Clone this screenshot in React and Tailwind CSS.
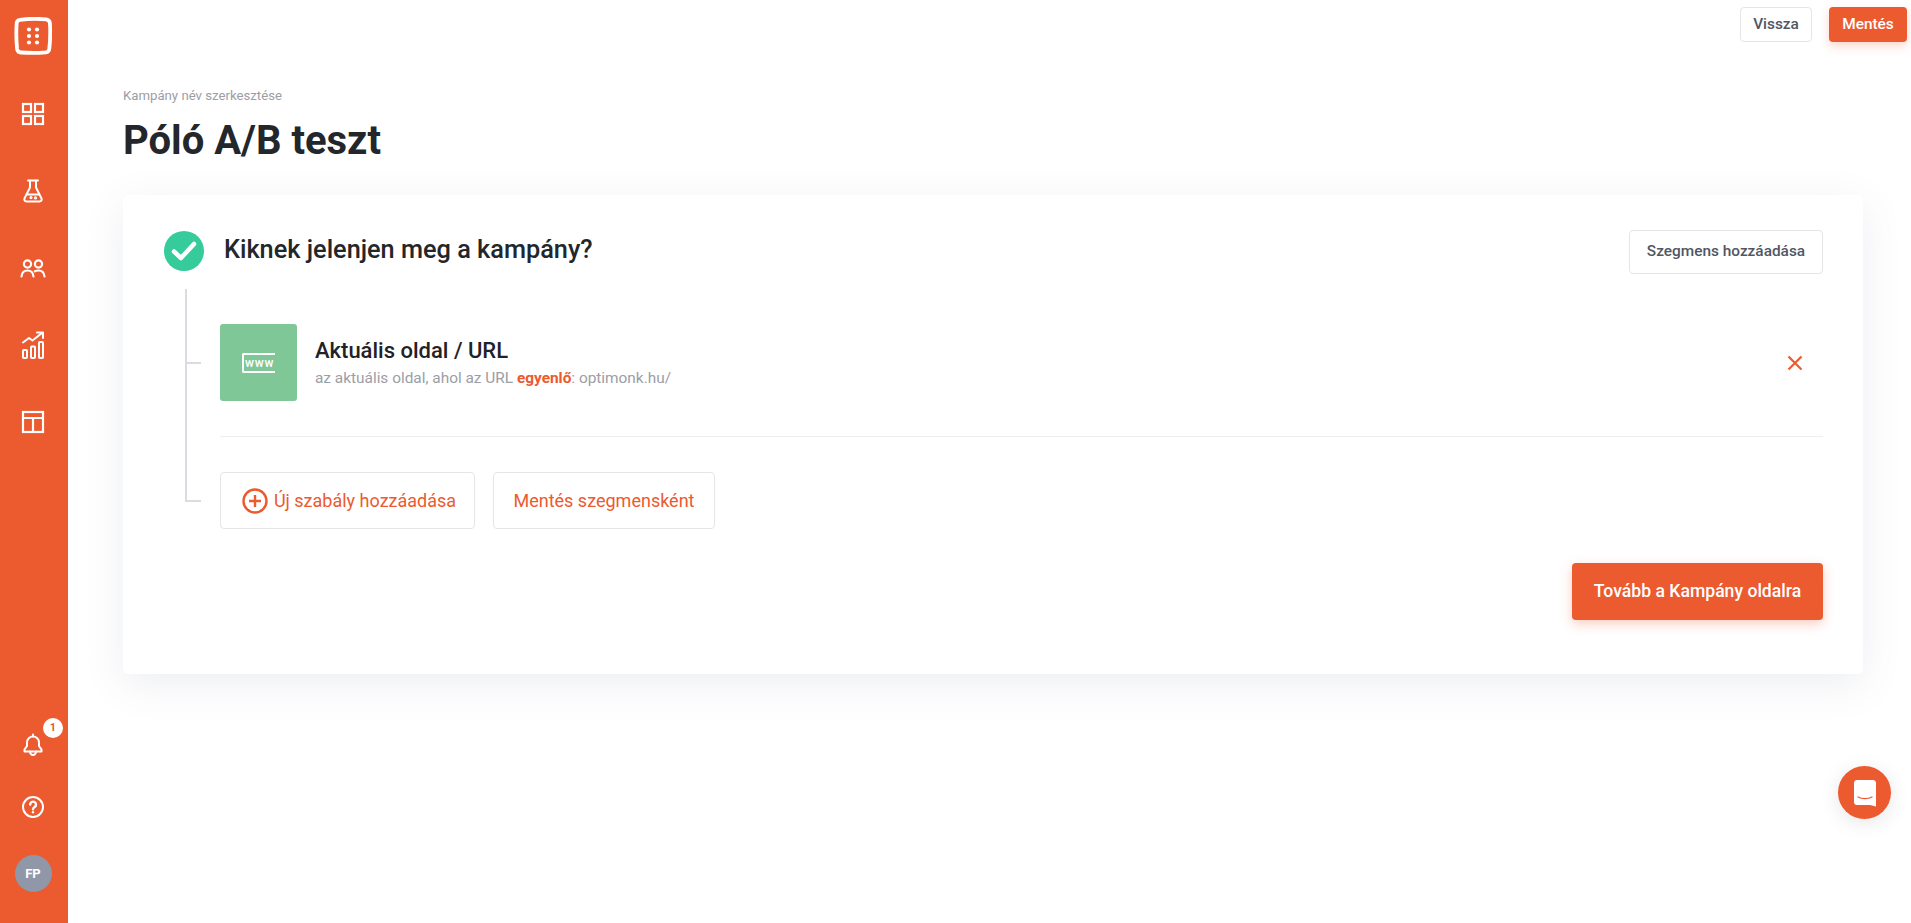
const LogoIcon = () => (
  <svg width="38" height="38" viewBox="0 0 38 38" fill="none">
    <path d="M6 2.800 C14 1.800 24 1.600 32 2.300 C34.400 2.500 35.700 3.800 35.900 6.200 C36.400 14 36.200 24 35.300 31.800 C35.100 34 33.900 35 31.800 35.300 C23 36.200 14 36 6.800 35.500 C4.700 35.400 3.400 34.200 3.100 32 C2.300 24 2.100 14 2.700 6 C2.900 4.200 4 3.100 6 2.800 Z" stroke="white" strokeWidth="3.800" />
    {[12.500, 19, 25.500].map((y) => (
      <g key={y} fill="white">
        <circle cx="15" cy={y} r="2.100" />
        <circle cx="23" cy={y} r="2.100" />
      </g>
    ))}
  </svg>
);

const GridIcon = () => (
  <svg width="24" height="24" viewBox="0 0 24 24" fill="none" stroke="white" strokeWidth="2.200">
    <rect x="2" y="2" width="8" height="8" />
    <rect x="14" y="2" width="8" height="8" />
    <rect x="2" y="14" width="8" height="8" />
    <rect x="14" y="14" width="8" height="8" />
  </svg>
);

const FlaskIcon = () => (
  <svg width="24" height="24" viewBox="0 0 24 24" fill="none" stroke="white" strokeWidth="2" strokeLinecap="round" strokeLinejoin="round">
    <path d="M7 1.500h10" />
    <path d="M9 1.500v7L3.600 19.200c-.8 1.700.2 3.300 2 3.300h12.800c1.800 0 2.800-1.600 2-3.300L15 8.500v-7" />
    <path d="M6.600 15.500h10.800" />
    <circle cx="10" cy="18.600" r=".6" fill="white" />
    <circle cx="14.500" cy="18.900" r=".6" fill="white" />
  </svg>
);

const UsersIcon = () => (
  <svg width="26" height="20" viewBox="0 0 26 20" fill="none" stroke="white" strokeWidth="2.200" strokeLinecap="round">
    <circle cx="7.500" cy="6" r="3.600" />
    <circle cx="18.500" cy="6" r="3.600" />
    <path d="M1.500 18.500c.4-4 2.800-6 6-6s5.600 2 6 6" />
    <path d="M14.800 13.300c1-.6 2.300-.8 3.700-.8 3.200 0 5.600 2 6 6" />
  </svg>
);

const ChartIcon = () => (
  <svg width="24" height="28" viewBox="0 0 24 28" fill="none" stroke="white" strokeWidth="2" strokeLinecap="round" strokeLinejoin="round">
    <path d="M2 11.500l6-4.500 3.500 2.500L21 2" />
    <path d="M16 1.500h6v5.500" />
    <rect x="2" y="19" width="4" height="8" rx=".8" />
    <rect x="10" y="15.500" width="4" height="11.500" rx=".8" />
    <rect x="18" y="11" width="4" height="16" rx=".8" />
  </svg>
);

const TemplateIcon = () => (
  <svg width="24" height="24" viewBox="0 0 24 24" fill="none" stroke="white" strokeWidth="2.200">
    <rect x="2" y="2" width="20" height="20" />
    <path d="M2 8h20M12 8v14" />
  </svg>
);

const BellIcon = () => (
  <svg width="20" height="24" viewBox="0 0 20 24" fill="none" stroke="white" strokeWidth="2" strokeLinecap="round" strokeLinejoin="round">
    <path d="M10 1.500v1.800" />
    <path d="M4 13V9.500a6 6 0 0 1 12 0V13l2.500 3.500v2h-17v-2z" />
    <path d="M7 18.500c.2 2.200 1.400 3.500 3 3.500s2.800-1.300 3-3.500" />
  </svg>
);

const HelpIcon = () => (
  <svg width="24" height="24" viewBox="0 0 24 24" fill="none" stroke="white" strokeWidth="2" strokeLinecap="round">
    <circle cx="12" cy="12" r="10" />
    <path d="M9.200 9.500a2.900 2.900 0 1 1 4.400 2.500c-1 .6-1.600 1.200-1.600 2.300" strokeWidth="2.400" />
    <circle cx="12" cy="17.300" r="1.200" fill="white" stroke="none" />
  </svg>
);

const ChatIcon = () => (
  <svg width="24" height="28" viewBox="0 0 24 28" fill="none">
    <path d="M4 1h16c1.700 0 3 1.300 3 3v23.500l-6-1.500H4c-1.700 0-3-1.300-3-3V4c0-1.700 1.300-3 3-3z" fill="white" />
    <path d="M5 18c4 2.200 10 2.200 14 0" stroke="#ec5a2f" strokeWidth="1.400" strokeLinecap="round" />
  </svg>
);

const navIcons = [GridIcon, FlaskIcon, UsersIcon, ChartIcon, TemplateIcon];

const Sidebar = () => (
  <aside className="flex h-full w-[68px] shrink-0 flex-col justify-between bg-[#ec5a2f] pr-[2px]">
    <div className="flex flex-col items-center pt-[17px]">
      <LogoIcon />
      <div className="mt-[20px] flex w-full flex-col items-center">
        {navIcons.map((Icon, i) => (
          <div key={i} className="flex h-[77px] w-full items-center justify-center">
            <Icon />
          </div>
        ))}
      </div>
    </div>
    <div className="flex flex-col items-center pb-[31px]">
      <div className="relative flex h-[62px] w-full items-center justify-center">
        <BellIcon />
        <span className="absolute left-[43px] top-[4px] flex h-[20px] w-[20px] items-center justify-center rounded-full bg-white text-[11px] font-bold text-[#ec5a2f]">
          1
        </span>
      </div>
      <div className="flex h-[62px] w-full items-center justify-center">
        <HelpIcon />
      </div>
      <div className="mt-[17px] flex h-[37px] w-[37px] items-center justify-center rounded-full bg-[#8f97a8] text-[13px] font-bold text-white">
        FP
      </div>
    </div>
  </aside>
);

const App = () => {
  return (
    <div className="flex h-screen overflow-hidden bg-white font-['Roboto',sans-serif] text-[#23262a]">
      <Sidebar />
      <main className="min-w-0 flex-1">
        <div className="flex justify-end gap-[17px] pr-[4px] pt-[7px]">
          <button className="h-[35px] w-[72px] rounded-[4px] border border-[#e3e5e8] bg-white text-[15.4px] font-medium text-[#505763]">
            Vissza
          </button>
          <button className="h-[35px] w-[78px] rounded-[4px] bg-[#ec5a2f] text-[15.4px] font-medium text-white shadow-[0_4px_10px_rgba(238,90,47,0.25)]">
            Mentés
          </button>
        </div>

        <div className="ml-[55px] mr-[48px] mt-[47px]">
          <div className="text-[13.2px] leading-[14px] text-[#9b9ea5]">Kampány név szerkesztése</div>
          <h1 className="mt-[14px] text-[40px] font-bold leading-[47px]">Póló A/B teszt</h1>

          <section className="mt-[31px] h-[479px] rounded-[6px] bg-white pl-[41px] pr-[40px] pt-[36px] shadow-[0_10px_40px_rgba(80,90,130,0.1)]">
            <div className="flex items-start justify-between">
              <div className="flex items-center gap-[20px]">
                <span className="flex h-[40px] w-[40px] items-center justify-center rounded-full bg-[#36cb9a]">
                  <svg width="26" height="20" viewBox="0 0 26 20" fill="none" stroke="white" strokeWidth="4.500" strokeLinecap="round" strokeLinejoin="round">
                    <path d="M3 10.500l7 6.500L23 3" />
                  </svg>
                </span>
                <h2 className="mb-[2px] text-[25.3px] font-medium leading-[32px]">Kiknek jelenjen meg a kampány?</h2>
              </div>
              <button className="-mt-[1px] h-[44px] w-[194px] rounded-[4px] border border-[#e3e5e8] bg-white text-[15.4px] font-medium text-[#505763]">
                Szegmens hozzáadása
              </button>
            </div>

            <div className="mt-[15px] flex">
              <div className="ml-[21px] w-[16px] shrink-0">
                <div className="h-[75px] border-b-2 border-l-2 border-[#d9dde2]" />
                <div className="h-[138px] border-b-2 border-l-2 border-[#d9dde2]" />
              </div>
              <div className="ml-[19px] min-w-0 flex-1">
                <div className="mt-[35px] flex items-center border-b border-[#eceef0] pb-[35px]">
                  <div className="flex h-[77px] w-[77px] items-center justify-center rounded-[3px] bg-[#80c797]">
                    <div className="flex h-[20px] w-[33px] items-center rounded-l-[2px] border-y-2 border-l-2 border-white text-[12px] font-medium leading-none tracking-[0.8px] text-white">
                      <span className="pl-[1px]">www</span>
                    </div>
                  </div>
                  <div className="ml-[18px] flex-1">
                    <div className="text-[22px] font-medium leading-[26px] text-[#1f2226]">Aktuális oldal / URL</div>
                    <div className="mt-[4px] text-[15.4px] leading-[20px] text-[#9b9ea5]">
                      az aktuális oldal, ahol az URL <span className="font-bold text-[#ec5a2f]">egyenlő</span>: optimonk.hu/
                    </div>
                  </div>
                  <svg className="mr-[20px]" width="16" height="16" viewBox="0 0 16 16" fill="none" stroke="#ec5a2f" strokeWidth="2.200">
                    <path d="M1.500 1.500l13 13M14.500 1.500l-13 13" />
                  </svg>
                </div>

                <div className="mt-[35px] flex gap-[18px]">
                  <button className="flex h-[57px] w-[255px] items-center justify-center gap-[6px] rounded-[4px] border border-[#e3e5e8] bg-white pl-[3px] text-[18px] text-[#ec5a2f]">
                    <svg width="26" height="26" viewBox="0 0 26 26" fill="none" stroke="#ec5a2f" strokeWidth="2.400">
                      <circle cx="13" cy="13" r="11.500" />
                      <path d="M13 7v12M7 13h12" />
                    </svg>
                    Új szabály hozzáadása
                  </button>
                  <button className="h-[57px] w-[222px] rounded-[4px] border border-[#e3e5e8] bg-white text-[18px] text-[#ec5a2f]">
                    Mentés szegmensként
                  </button>
                </div>

                <div className="mt-[34px] flex justify-end">
                  <button className="h-[57px] w-[251px] rounded-[4px] bg-[#ec5a2f] text-[17.6px] font-medium text-white shadow-[0_4px_12px_rgba(238,90,47,0.3)]">
                    Tovább a Kampány oldalra
                  </button>
                </div>
              </div>
            </div>
          </section>
        </div>
      </main>

      <button className="fixed left-[1838px] top-[766px] flex h-[53px] w-[53px] items-center justify-center rounded-full bg-[#ec5a2f] shadow-[0_4px_20px_rgba(0,0,0,0.1)]">
        <ChatIcon />
      </button>
    </div>
  );
};

export default App;
